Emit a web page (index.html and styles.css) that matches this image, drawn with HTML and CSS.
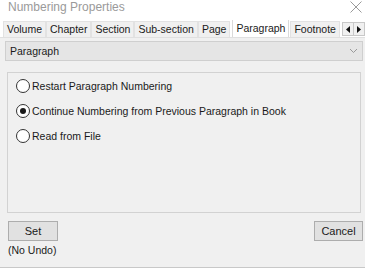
FILE: index.html
```html
<!DOCTYPE html>
<html lang="en">
<head>
    <meta charset="UTF-8">
    <title>Numbering Properties</title>
    <link rel="stylesheet" href="styles.css">
</head>
<body>
    <div class="window">
        <div class="titlebar">
            <span class="title">Numbering Properties</span>
            <svg class="close" width="12" height="12" viewBox="0 0 12 12">
                <path d="M0.5 0.5 L11.5 11.5 M11.5 0.5 L0.5 11.5" stroke="#9a9a9a" stroke-width="1" fill="none"/>
            </svg>
        </div>

        <div class="tabstrip">
            <div class="tabs">
                <span class="tab">Volume</span>
                <span class="tab">Chapter</span>
                <span class="tab">Section</span>
                <span class="tab">Sub-section</span>
                <span class="tab">Page</span>
                <span class="tab active">Paragraph</span>
                <span class="tab">Footnote</span>
            </div>
            <div class="scroller">
                <span class="arrow">
                    <svg width="4" height="7" viewBox="0 0 4 7"><path d="M4 0 L0 3.5 L4 7 Z" fill="#111"/></svg>
                </span>
                <span class="arrow">
                    <svg width="4" height="7" viewBox="0 0 4 7"><path d="M0 0 L4 3.5 L0 7 Z" fill="#111"/></svg>
                </span>
            </div>
        </div>

        <div class="content">
            <div class="select">
                <span>Paragraph</span>
                <svg width="9" height="6" viewBox="0 0 9 6">
                    <path d="M1 1 L4.5 4.5 L8 1" stroke="#999" stroke-width="1" fill="none"/>
                </svg>
            </div>

            <div class="group">
                <label class="radio"><span class="dot"></span>Restart Paragraph Numbering</label>
                <label class="radio"><span class="dot checked"></span>Continue Numbering from Previous Paragraph in Book</label>
                <label class="radio"><span class="dot"></span>Read from File</label>
            </div>

            <div class="actions">
                <div class="left">
                    <button class="btn">Set</button>
                    <span class="note">(No Undo)</span>
                </div>
                <button class="btn cancel">Cancel</button>
            </div>
        </div>
    </div>
</body>
</html>
```

FILE: styles.css
```css
* {
    margin: 0;
    padding: 0;
    box-sizing: border-box;
}

body {
    font-family: 'Liberation Sans', Arial, sans-serif;
    font-size: 10.5px;
    color: #1a1a1a;
    background-color: #fff;
}

.window {
    width: 365px;
    height: 268px;
    background-color: #f0f0f0;
    border-bottom: 1px solid #c8c8c8;
    overflow: hidden;
}

.titlebar {
    height: 20px;
    background-color: #fff;
    display: flex;
    align-items: flex-start;
    justify-content: space-between;
    padding: 0 3px 0 8px;
}

.title {
    font-size: 12px;
    line-height: 14px;
    color: #9a9a9a;
}

.close {
    margin-top: 1px;
}

.tabstrip {
    display: flex;
    height: 18px;
    background-color: #fff;
    border-bottom: 1px solid #e0e0e0;
    padding-left: 3px;
    overflow: hidden;
}

.tabs {
    display: flex;
    align-items: flex-end;
    flex: 1;
    overflow: hidden;
}

.tab {
    height: 16px;
    line-height: 15px;
    padding: 0 3px;
    background-color: #f0f0f0;
    border: 1px solid #e2e2e2;
    border-bottom: none;
    white-space: nowrap;
}

.tab.active {
    height: 18px;
    line-height: 16px;
    background-color: #fff;
    padding: 0 3px;
    margin: 0 1px 0 2px;
    border-color: #dadada;
}

.scroller {
    display: flex;
    align-items: flex-start;
    padding-top: 2px;
}

.arrow {
    width: 12px;
    height: 14px;
    display: flex;
    align-items: center;
    justify-content: center;
    background-color: #f0f0f0;
    border: 1px solid #c8c8c8;
    margin-left: -1px;
}

.content {
    padding: 3px 2px 0 5px;
}

.select {
    height: 20px;
    display: flex;
    align-items: center;
    justify-content: space-between;
    padding: 0 4px 0 4px;
    background-color: #e5e5e5;
    border: 1px solid #cfcfcf;
}

.group {
    margin: 11px 2px 0 2px;
    height: 141px;
    border: 1px solid #d2d2d2;
    padding: 0 0 0 8px;
}

.radio {
    display: flex;
    align-items: center;
    height: 25px;
}

.dot {
    width: 14px;
    height: 14px;
    border: 1px solid #333;
    border-radius: 50%;
    background-color: #fff;
    margin-right: 2px;
    display: flex;
    align-items: center;
    justify-content: center;
}

.dot.checked::after {
    content: "";
    width: 6px;
    height: 6px;
    border-radius: 50%;
    background-color: #1a1a1a;
}

.actions {
    display: flex;
    justify-content: space-between;
    align-items: flex-start;
    margin: 8px 0 0 3px;
}

.left {
    display: flex;
    flex-direction: column;
    gap: 3px;
}

.btn {
    width: 50px;
    height: 20px;
    font-family: inherit;
    font-size: 11px;
    color: #1a1a1a;
    background-color: #e1e1e1;
    border: 1px solid #adadad;
}

.cancel {
    width: 49px;
}

.note {
    font-size: 10.5px;
}
```
